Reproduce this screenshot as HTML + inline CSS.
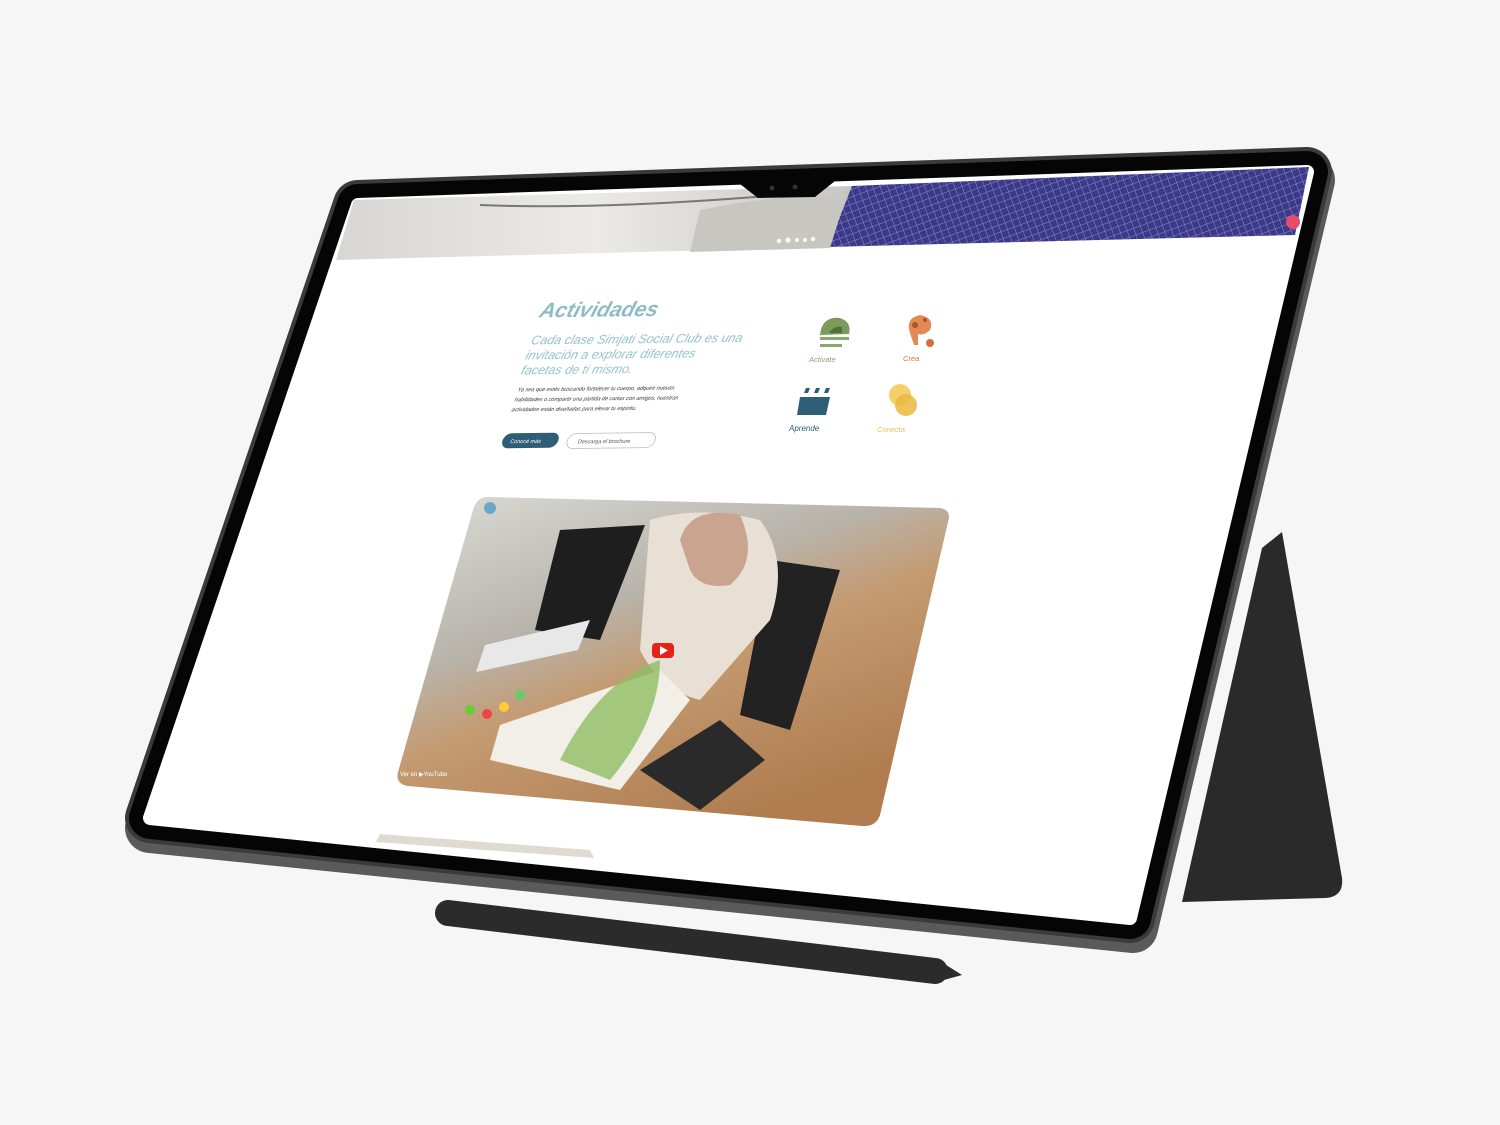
<!DOCTYPE html>
<html><head><meta charset="utf-8"><style>
html,body{margin:0;padding:0;background:#f6f6f6;}
svg{display:block}
text{font-family:"Liberation Sans",sans-serif;}
</style></head><body>
<svg width="1500" height="1125" viewBox="0 0 1500 1125" xmlns="http://www.w3.org/2000/svg">
<defs>
<pattern id="grid" width="7" height="7" patternUnits="userSpaceOnUse" patternTransform="rotate(-20)">
<rect width="7" height="7" fill="#3b3a8a"/><path d="M0 0H7M0 0V7" stroke="#8e8cc4" stroke-width="1"/>
</pattern>
<linearGradient id="vid" x1="0" y1="0" x2="0.6" y2="1">
<stop offset="0" stop-color="#dcdcd8"/><stop offset="0.4" stop-color="#b8b4ac"/><stop offset="0.6" stop-color="#c49a70"/><stop offset="1" stop-color="#b07c50"/>
</linearGradient>
<linearGradient id="hdr" x1="0" y1="0" x2="1" y2="0">
<stop offset="0" stop-color="#d8d6d2"/><stop offset="0.5" stop-color="#eceae6"/><stop offset="1" stop-color="#c8c6c2"/>
</linearGradient>
</defs>
<path d="M1262 548 L1282 532 L1342 878 Q1344 897 1325 898 L1182 902 Z" fill="#2a2a2a"/>
<path d="M358 213 L1310 180 L1133 928 L150 828 Z" fill="#5a5a5a" stroke="#5a5a5a" stroke-width="50" stroke-linejoin="round"/>
<path d="M358 205 L1307 172 L1130 918 L150 818 Z" fill="#3a3a3a" stroke="#3a3a3a" stroke-width="50" stroke-linejoin="round"/>
<path d="M358 205 L1307 172 L1130 918 L150 818 Z" fill="#050505" stroke="#050505" stroke-width="42" stroke-linejoin="round"/>
<path d="M358 205 L1307 172 L1130 918 L150 818 Z" fill="#ffffff" stroke="#ffffff" stroke-width="14" stroke-linejoin="round"/>
<path d="M354 200 L852 186 L828 247 L336 260 Z" fill="url(#hdr)"/>
<path d="M852 186 L1309 167 L1295 235 L828 247 Z" fill="url(#grid)"/>
<path d="M480 205 Q600 210 780 195" stroke="#777" stroke-width="2" fill="none"/>
<path d="M700 210 Q800 190 845 200 L830 248 L690 252 Z" fill="#c8c6c0"/>
<circle cx="1293" cy="222" r="7" fill="#e84a6a"/>
<g fill="#fff" opacity="0.9"><circle cx="779" cy="241" r="2.2"/><circle cx="788" cy="240" r="2.6"/><circle cx="797" cy="240" r="2.2"/><circle cx="805" cy="240" r="2.2"/><circle cx="813" cy="239" r="2.2"/></g>
<path d="M740 184 L835 181 L815 197 L758 198 Z" fill="#050505"/>
<circle cx="772" cy="188" r="2.5" fill="#333"/><circle cx="795" cy="187" r="2.5" fill="#333"/>
<g transform="matrix(1,-0.012,-0.3,1,0,0)">
<text x="636" y="325" font-size="21" font-style="italic" font-weight="bold" fill="#8cbdc6">Actividades</text>
<text x="636" y="352" font-size="12.5" font-style="italic" fill="#93c3c9">Cada clase Simjati Social Club es una</text>
<text x="635" y="367" font-size="12.5" font-style="italic" fill="#93c3c9">invitación a explorar diferentes</text>
<text x="635" y="382" font-size="12.5" font-style="italic" fill="#93c3c9">facetas de ti mismo.</text>
<text x="637" y="399" font-size="5.5" font-style="italic" fill="#333">Ya sea que estés buscando fortalecer tu cuerpo, adquirir nuevas</text>
<text x="637" y="409" font-size="5.5" font-style="italic" fill="#333">habilidades o compartir una partida de cartas con amigos, nuestras</text>
<text x="637" y="419" font-size="5.5" font-style="italic" fill="#333">actividades están diseñadas para elevar tu espíritu.</text>
<rect x="637" y="441" width="56" height="15" rx="7.5" fill="#2e5d76"/>
<text x="645" y="451" font-size="5.5" fill="#fff">Conocé más</text>
<rect x="702" y="442" width="88" height="15" rx="7.5" fill="#fff" stroke="#bbb" stroke-width="0.8"/>
<text x="713" y="452" font-size="5.5" fill="#555">Descarga el brochure</text>
</g>
<text x="809" y="362" font-size="7.5" font-style="italic" fill="#8aa86c">Activate</text>
<text x="903" y="361" font-size="7.5" font-style="italic" fill="#d3703e">Crea</text>
<text x="789" y="431" font-size="8" font-style="italic" fill="#2e5d76">Aprende</text>
<text x="877" y="432" font-size="7.5" font-style="italic" fill="#f0c250">Conecta</text>
<path d="M820 335 Q822 316 840 318 Q852 322 849 334 Z" fill="#7c9a5a"/>
<path d="M829 333 Q834 325 842 327 L842 333 Z" fill="#4e7338"/>
<rect x="820" y="337" width="29" height="3" fill="#8aa86c"/><rect x="820" y="344" width="22" height="3" fill="#8aa86c"/>
<path d="M910 333 Q905 318 920 315 Q935 318 930 330 Q924 336 918 334 L918 345 L914 345 Z" fill="#e08a55"/>
<circle cx="915" cy="325" r="3" fill="#b5502a"/><circle cx="925" cy="320" r="2" fill="#b5502a"/>
<circle cx="930" cy="343" r="4" fill="#d3703e"/>
<path d="M800 397 L830 397 L826 415 L797 415 Z" fill="#2e5d76"/>
<path d="M806 388 l4 0 -2 5 -4 0Z M816 388 l4 0 -2 5 -4 0Z M826 388 l4 0 -2 5 -4 0Z" fill="#2e5d76"/>
<circle cx="900" cy="395" r="11" fill="#f5cf6a"/><circle cx="906" cy="405" r="11" fill="#eab83e" opacity="0.85"/>
<path d="M490 497 L940 508 Q952 510 948 522 L880 815 Q876 827 862 826 L408 786 Q395 784 398 772 L473 510 Q477 496 490 497 Z" fill="url(#vid)"/>
<path d="M560 530 L645 525 L600 640 L535 630 Z" fill="#1e1e1e"/>
<path d="M770 560 L840 570 L790 730 L740 715 Z" fill="#222"/>
<path d="M650 520 Q700 505 760 520 Q790 560 770 620 L700 700 Q660 690 640 650 Z" fill="#e8e0d4"/>
<path d="M680 540 Q690 505 740 515 Q760 560 730 585 Q700 590 690 570 Z" fill="#c9a58f"/>
<path d="M485 645 L590 620 L578 650 L476 672 Z" fill="#e8e8e8"/>
<path d="M500 725 L660 670 L690 700 L620 790 L490 760 Z" fill="#f2efe8"/>
<path d="M560 760 Q600 680 660 660 Q660 720 610 780 Z" fill="#8dbd62" opacity="0.8"/>
<path d="M640 770 L720 720 L765 760 L700 810 Z" fill="#2a2a2a"/>
<g><circle cx="470" cy="710" r="5" fill="#6c3"/><circle cx="487" cy="714" r="5" fill="#e44"/><circle cx="504" cy="707" r="5" fill="#fc3"/><circle cx="520" cy="695" r="5" fill="#6c6"/></g>
<rect x="652" y="643" width="22" height="15" rx="4" fill="#e62117"/>
<path d="M660 646 L668 650.5 L660 655 Z" fill="#fff"/>
<text x="400" y="776" font-size="6" fill="#fff">Ver en ▶YouTube</text>
<circle cx="490" cy="508" r="6" fill="#6da6c6"/>
<path d="M380 834 L590 850 L594 858 L376 842 Z" fill="#d8d2c4" opacity="0.8"/>
<line x1="448" y1="913" x2="935" y2="971" stroke="#2b2b2b" stroke-width="26" stroke-linecap="round"/>
<path d="M935 958 L962 975 L933 983 Z" fill="#2b2b2b"/>
</svg>
</body></html>
